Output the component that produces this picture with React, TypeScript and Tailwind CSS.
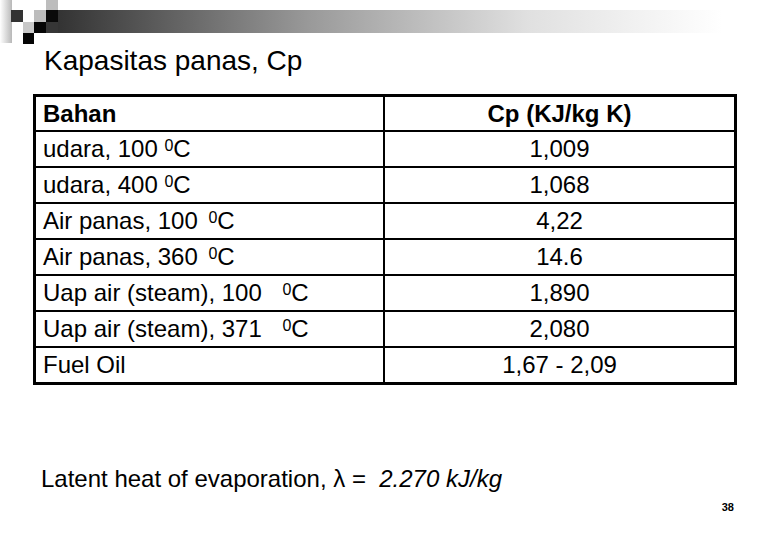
const rows = [
  { name: "udara, 100", gap: "ml-0", cp: "1,009" },
  { name: "udara, 400", gap: "ml-0", cp: "1,068" },
  { name: "Air panas, 100", gap: "ml-[4px]", cp: "4,22" },
  { name: "Air panas, 360", gap: "ml-[4px]", cp: "14.6" },
  { name: "Uap air (steam), 100", gap: "ml-[14px]", cp: "1,890" },
  { name: "Uap air (steam), 371", gap: "ml-[14px]", cp: "2,080" },
  { name: "Fuel Oil", gap: "", cp: "1,67 - 2,09" },
];

function CornerMark() {
  return (
    <svg width="58" height="44" viewBox="0 0 58 44" className="shrink-0">
      <defs>
        <linearGradient id="side" x1="0" x2="1" y1="0" y2="0">
          <stop offset="0" stopColor="#ffffff" />
          <stop offset="1" stopColor="#b8b8b8" />
        </linearGradient>
      </defs>
      <rect x="0" y="0" width="12" height="43" fill="url(#side)" />
      <rect x="11" y="10" width="12" height="12" fill="#333333" />
      <rect x="34" y="10" width="12" height="12" fill="#bdbdbd" />
      <rect x="46" y="0" width="12" height="10" fill="#bdbdbd" />
      <rect x="46" y="10" width="12" height="12" fill="#0a0a0a" />
      <rect x="46" y="22" width="12" height="11" fill="#363636" />
      <rect x="23" y="22" width="11" height="11" fill="#c8c8c8" />
      <rect x="34" y="22" width="12" height="11" fill="#050505" />
      <rect x="23" y="33" width="11" height="11" fill="#050505" />
    </svg>
  );
}

export default function App() {
  return (
    <div className="w-[780px] h-[540px] bg-white flex flex-col font-['Liberation_Sans',Arial,sans-serif] text-black overflow-hidden">
      {/* Top decoration */}
      <div className="flex items-start h-[44px]">
        <CornerMark />
        <div className="mt-[10px] h-[23px] flex-1 bg-[linear-gradient(to_right,#333333_0%,#9a9a9a_35%,#e0e0e0_65%,#ffffff_92%)]" />
      </div>

      {/* Title */}
      <h1 className="ml-[44px] mt-[3px] text-[28px] leading-none">Kapasitas panas, Cp</h1>

      {/* Table */}
      <div className="ml-[33px] mt-[19px] w-[704px] border-[3px] border-black text-[24px] leading-none">
        <div className="flex h-[33px]">
          <div className="w-[349px] border-r-2 border-black pl-[7px] flex items-center font-bold">Bahan</div>
          <div className="flex-1 flex items-center justify-center font-bold">Cp (KJ/kg K)</div>
        </div>
        {rows.map((r) => (
          <div key={r.name} className="flex h-[36px] border-t-2 border-black">
            <div className="w-[349px] border-r-2 border-black pl-[7px] flex items-center">
              <span className="whitespace-pre">
                {r.name}
                {r.gap !== "" && (
                  <>
                    {" "}
                    <sup className={`${r.gap} text-[16px] top-[-0.35em]`}>0</sup>C
                  </>
                )}
              </span>
            </div>
            <div className="flex-1 flex items-center justify-center">{r.cp}</div>
          </div>
        ))}
      </div>

      {/* Latent heat */}
      <p className="ml-[41px] mt-[82px] text-[24px] leading-none whitespace-pre">
        Latent heat of evaporation, λ =  <span className="italic">2.270 kJ/kg</span>
      </p>

      {/* Page number */}
      <div className="flex justify-end pr-[46px] mt-[11px]">
        <span className="text-[11px] font-bold leading-none">38</span>
      </div>
    </div>
  );
}
